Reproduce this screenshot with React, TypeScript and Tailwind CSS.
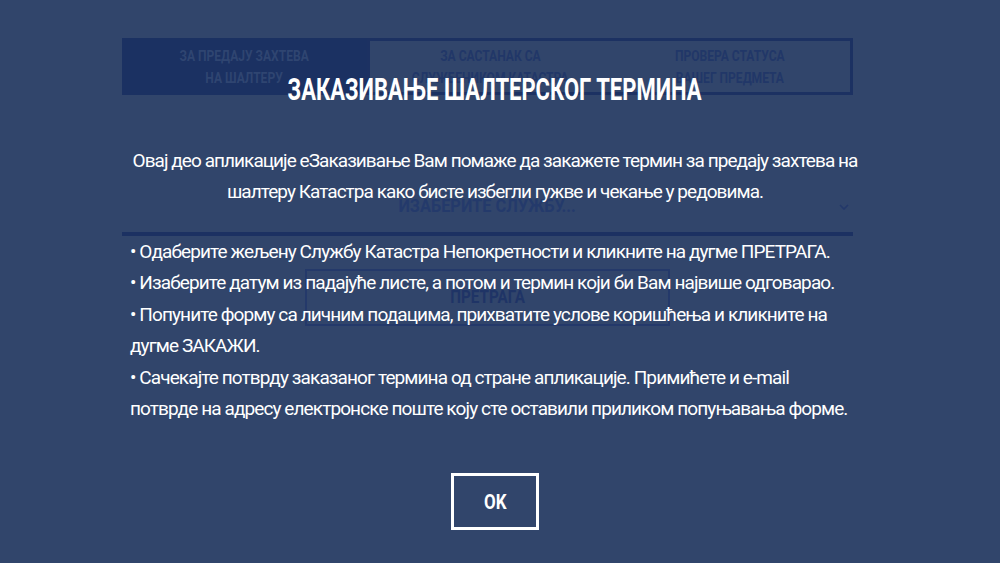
const font = "font-['Roboto','Noto_Sans',sans-serif]"

const bullets = [
  ['• Одаберите жељену Службу Катастра Непокретности и кликните на дугме ПРЕТРАГА.'],
  ['• Изаберите датум из падајуће листе, а потом и термин који би Вам највише одговарао.'],
  ['• Попуните форму са личним подацима, прихватите услове коришћења и кликните на', 'дугме ЗАКАЖИ.'],
  [
    '• Сачекајте потврду заказаног термина од стране апликације. Примићете и e-mail',
    'потврде на адресу електронске поште коју сте оставили приликом попуњавања форме.',
  ],
]

function Squeeze({ children, className }: { children: React.ReactNode; className: string }) {
  return <span className={`inline-block whitespace-nowrap ${className}`}>{children}</span>
}

function Tabs() {
  return (
    <div className="flex h-[57px] text-[14px] font-bold leading-[22px]">
      <div className="flex w-[245px] flex-col items-center justify-center bg-[#1b3162] text-[#2f4571]">
        <Squeeze className="scale-x-[0.86]">ЗА ПРЕДАЈУ ЗАХТЕВА</Squeeze>
        <Squeeze className="scale-x-[0.86]">НА ШАЛТЕРУ</Squeeze>
      </div>
      <div className="flex flex-1 border-[3px] border-[#1c3162] text-[#213768]">
        <div className="flex flex-1 flex-col items-center justify-center">
          <Squeeze className="scale-x-[0.86]">ЗА САСТАНАК СА</Squeeze>
          <Squeeze className="scale-x-[0.86]">СЛУЖБЕНИКОМ КАТАСТРА</Squeeze>
        </div>
        <div className="flex flex-1 flex-col items-center justify-center">
          <Squeeze className="scale-x-[0.86]">ПРОВЕРА СТАТУСА</Squeeze>
          <Squeeze className="scale-x-[0.86]">ВАШЕГ ПРЕДМЕТА</Squeeze>
        </div>
      </div>
    </div>
  )
}

function Page() {
  return (
    <div className="ml-[122px] w-[731px] pt-[38px]">
      <Tabs />
      <div className="relative mt-[85px] flex h-[56px] items-center justify-center border-b-4 border-[#1c3162]">
        <Squeeze className="scale-x-[0.86] text-[19px] font-bold text-[#243a6b]">
          ИЗАБЕРИТЕ СЛУЖБУ...
        </Squeeze>
        <svg
          className="absolute right-[4px] top-[24px]"
          width="10"
          height="6"
          viewBox="0 0 10 6"
          fill="none"
          stroke="#23386a"
          strokeWidth="1.6">
          <path d="M1 1l4 4 4-4" />
        </svg>
      </div>
      <div className="mx-auto mt-[33px] flex h-[57px] w-[365px] items-center justify-center border-2 border-[#24396a]">
        <Squeeze className="scale-x-[0.8] text-[19px] font-bold text-[#1f3466]">ПРЕТРАГА</Squeeze>
      </div>
    </div>
  )
}

function Modal() {
  return (
    <div className="absolute inset-0 flex flex-col items-center pt-[72px] text-white">
      <div className="mr-[10px] w-[730px]">
        <h1 className="text-center text-[31px] font-bold leading-[36px]">
          <Squeeze className="scale-x-[0.71]">ЗАКАЗИВАЊЕ ШАЛТЕРСКОГ ТЕРМИНА</Squeeze>
        </h1>
        <p className="mt-[37px] whitespace-nowrap text-center text-[19px] leading-[31px] tracking-[-0.95px]">
          Овај део апликације еЗаказивање Вам помаже да закажете термин за предају захтева на
          <br />
          шалтеру Катастра како бисте избегли гужве и чекање у редовима.
        </p>
        <div className="mt-[29px] text-[19px] leading-[31.4px] tracking-[-0.9px]">
          {bullets.map((lines) => (
            <p key={lines[0]} className="whitespace-nowrap">
              {lines[0]}
              {lines[1] && (
                <>
                  <br />
                  {lines[1]}
                </>
              )}
            </p>
          ))}
        </div>
      </div>
      <button
        type="button"
        className="mr-[10px] mt-[49px] flex h-[57px] w-[88px] items-center justify-center border-[3px] border-white text-[20px] font-bold">
        <Squeeze className="scale-x-[0.85]">OK</Squeeze>
      </button>
    </div>
  )
}

export default function App() {
  return (
    <div className={`relative h-[563px] w-[1000px] overflow-hidden bg-[#31456b] ${font}`}>
      <Page />
      <Modal />
    </div>
  )
}
